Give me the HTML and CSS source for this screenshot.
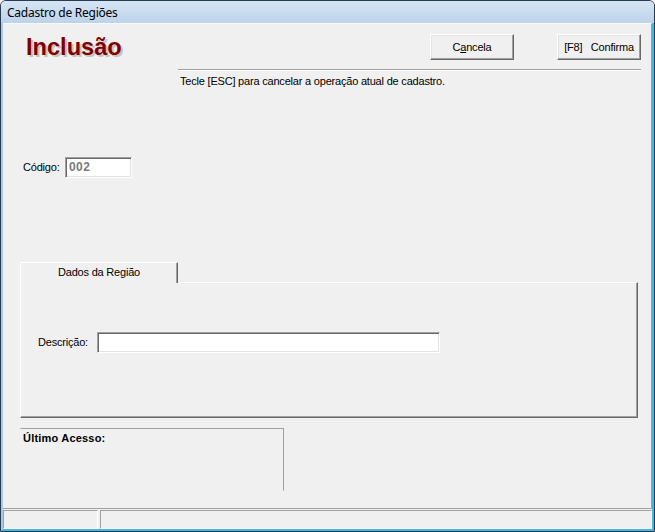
FILE: index.html
```html
<!DOCTYPE html>
<html lang="pt-BR">
<head>
<meta charset="utf-8">
<title>Cadastro de Regiões</title>
<link rel="stylesheet" href="styles.css">
</head>
<body>
<div class="window">
  <div class="titlebar"><span class="title">Cadastro de Regiões</span></div>
  <div class="frame">
    <div class="client">
      <div class="header">
        <div class="mode">Inclusão</div>
        <div class="actions">
          <button class="btn" type="button">C<span class="u">a</span>ncela</button>
          <button class="btn pre" type="button">[F8]   Confirma</button>
        </div>
      </div>
      <div class="separator"></div>
      <div class="info">Tecle [ESC] para cancelar a operação atual de cadastro.</div>
      <div class="row codigo">
        <label class="lbl lbl-codigo">Código:</label>
        <div class="field field-codigo">002</div>
      </div>
      <div class="tabs">
        <div class="tabstrip">
          <div class="tab active">Dados da Região</div>
        </div>
        <div class="tabpanel">
          <div class="row desc">
            <label class="lbl lbl-desc">Descrição:</label>
            <div class="field field-desc"></div>
          </div>
        </div>
      </div>
      <div class="lastaccess">Último Acesso:</div>
    </div>
    <div class="statusbar">
      <div class="panel p1"></div>
      <div class="panel p2"></div>
    </div>
  </div>
</div>
</body>
</html>
```
FILE: styles.css
```css
* { box-sizing: border-box; }
html, body { margin: 0; padding: 0; background: #f0f0f0; }
body {
  font-family: "Liberation Sans", Arial, sans-serif;
  font-size: 11px;
  color: #000;
}
.window {
  width: 655px;
  height: 532px;
  border: 1px solid #2b3b4e;
  border-radius: 6px 6px 0 0;
  overflow: hidden;
  display: flex;
  flex-direction: column;
  background: #f0f0f0;
}
.titlebar {
  height: 22px;
  flex: none;
  background: linear-gradient(#d6e5f5, #bcd3eb);
  padding-left: 6px;
  display: flex;
  align-items: center;
}
.title {
  font-family: "Noto Sans", "Open Sans", sans-serif;
  font-size: 12px;
  letter-spacing: -0.25px;
  color: #000;
  padding-top: 1px;
}
.frame {
  flex: 1;
  display: flex;
  flex-direction: column;
  border-left: 2px solid #a8c9e8;
  border-right: 2px solid #43b5e6;
  border-bottom: 2px solid #43b5e6;
}
.client {
  height: 486px;
  flex: none;
  border-right: 1px solid #a0a0a0;
  border-bottom: 1px solid #a0a0a0;
  border-top: 1px solid #f8fbfe;
  letter-spacing: -0.2px;
}
.header {
  display: flex;
  justify-content: space-between;
  align-items: flex-start;
  padding: 10px 10px 0 23px;
  height: 36px;
}
.mode {
  font-size: 23.6px;
  font-weight: bold;
  color: #800000;
  line-height: 25px;
  margin-top: 1px;
  letter-spacing: 0;
  text-shadow: 2px 2px 0 #c8c2c2;
}
.actions {
  display: flex;
  gap: 43px;
}
.btn {
  width: 84px;
  height: 26px;
  padding: 0;
  margin: 0;
  font-family: "Liberation Sans", Arial, sans-serif;
  font-size: 11px;
  letter-spacing: -0.2px;
  color: #000;
  background: #f0f0f0;
  border-style: solid;
  border-width: 1px;
  border-color: #ffffff #696969 #696969 #ffffff;
  box-shadow: inset -1px -1px 0 #a0a0a0, inset 1px 1px 0 #e3e3e3;
}
.pre { white-space: pre; }
.u { text-decoration: underline; }
.separator {
  margin: 9px 10px 0 175px;
  height: 2px;
  border-top: 1px solid #a0a0a0;
  border-bottom: 1px solid #ffffff;
}
.info {
  margin-top: 4px;
  padding-left: 177px;
  line-height: 13px;
  height: 13px;
}
.row {
  display: flex;
  align-items: center;
}
.codigo {
  margin-top: 69px;
  padding-left: 20px;
  height: 21px;
}
.lbl { display: block; }
.lbl-codigo { width: 42px; margin-top: -2px; }
.field {
  height: 21px;
  background: #ffffff;
  border-style: solid;
  border-width: 1px;
  border-color: #a0a0a0 #ffffff #ffffff #a0a0a0;
  box-shadow: inset 1px 1px 0 #696969, inset -1px -1px 0 #e3e3e3;
}
.field-codigo {
  width: 67px;
  color: #7a7a7a;
  font-weight: bold;
  font-size: 12px;
  letter-spacing: 0.4px;
  padding: 2px 0 0 3px;
  line-height: 15px;
}
.tabs {
  margin: 84px 0 0 17px;
  width: 618px;
}
.tabstrip {
  height: 20px;
  display: flex;
}
.tab {
  width: 158px;
  height: 21px;
  text-align: center;
  line-height: 18px;
  background: #f0f0f0;
  border-top: 1px solid #ffffff;
  border-left: 1px solid #ffffff;
  border-right: 1px solid #696969;
  box-shadow: inset -1px 0 0 #a0a0a0;
  position: relative;
  z-index: 1;
  padding-top: 0;
}
.tabpanel {
  height: 136px;
  border-style: solid;
  border-width: 1px;
  border-color: #ffffff #696969 #696969 #ffffff;
  box-shadow: inset -1px -1px 0 #a0a0a0;
  padding: 49px 0 0 17px;
}
.lbl-desc { width: 59px; margin-top: -1px; }
.field-desc { width: 343px; }
.lastaccess {
  margin: 10px 0 0 17px;
  width: 264px;
  height: 63px;
  border-style: solid;
  border-width: 1px;
  border-color: #a0a0a0 #a0a0a0 #f0f0f0 #f0f0f0;
  font-weight: bold;
  letter-spacing: 0.2px;
  padding: 3px 0 0 2px;
  line-height: 13px;
}
.statusbar {
  flex: 1;
  display: flex;
  gap: 2px;
  padding-top: 1px;
}
.panel {
  height: 19px;
  border-style: solid;
  border-width: 1px;
  border-color: #a0a0a0 #ffffff #ffffff #a0a0a0;
}
.p1 { width: 95px; }
.p2 { flex: 1; }
```
